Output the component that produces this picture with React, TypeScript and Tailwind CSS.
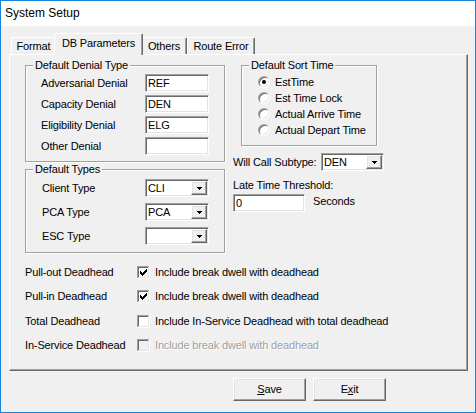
import React from "react";

// Classic Win32 bevels
const sunken =
  "border border-t-[#a0a0a0] border-l-[#a0a0a0] border-b-white border-r-white shadow-[inset_1px_1px_0_#696969,inset_-1px_-1px_0_#e3e3e3]";
const raised =
  "border border-t-white border-l-white border-b-[#696969] border-r-[#696969] shadow-[inset_-1px_-1px_0_#a0a0a0,inset_1px_1px_0_#e3e3e3]";

function GroupBox({
  title,
  className = "",
  children,
}: {
  title: string;
  className?: string;
  children: React.ReactNode;
}) {
  return (
    <fieldset
      className={`border border-[#a0a0a0] shadow-[1px_1px_0_#fff,inset_1px_1px_0_#fff] ${className}`}
    >
      <legend className="ml-[7px] px-[2px] leading-[13px] bg-[#f0f0f0]">{title}</legend>
      {children}
    </fieldset>
  );
}

function TextBox({ value = "", width }: { value?: string; width: string }) {
  return (
    <div className={`${sunken} ${width} h-[18px] bg-white flex items-center pl-[2px]`}>{value}</div>
  );
}

function DropArrow() {
  return (
    <svg width="5" height="3" viewBox="0 0 5 3" shapeRendering="crispEdges">
      <rect x="0" y="0" width="5" height="1" fill="#000" />
      <rect x="1" y="1" width="3" height="1" fill="#000" />
      <rect x="2" y="2" width="1" height="1" fill="#000" />
    </svg>
  );
}

function ComboBox({ value = "", width = "w-[64px]" }: { value?: string; width?: string }) {
  return (
    <div className={`${sunken} ${width} h-[18px] bg-white flex p-[1px] shrink-0`}>
      <span className="flex-1 flex items-center pl-[1px]">{value}</span>
      <div className={`${raised} w-[16px] bg-[#f0f0f0] flex items-center justify-center`}>
        <DropArrow />
      </div>
    </div>
  );
}

function Radio({ label, checked = false }: { label: string; checked?: boolean }) {
  return (
    <div className="h-[16px] flex items-center gap-[5px]">
      <div className="w-[12px] h-[12px] rounded-full border border-t-[#a0a0a0] border-l-[#a0a0a0] border-r-white border-b-white bg-white shadow-[inset_1px_1px_0_#696969,inset_-1px_-1px_0_#e3e3e3] flex items-center justify-center">
        {checked && <div className="w-[4px] h-[4px] rounded-full bg-black" />}
      </div>
      <span>{label}</span>
    </div>
  );
}

function CheckBox({ checked = false, disabled = false }: { checked?: boolean; disabled?: boolean }) {
  const face = disabled ? "#f0f0f0" : "#ffffff";
  return (
    <svg width="13" height="13" viewBox="0 0 13 13" shapeRendering="crispEdges" className="shrink-0">
      <rect x="0" y="0" width="13" height="13" fill="#ffffff" />
      <rect x="2" y="2" width="9" height="9" fill={face} />
      <rect x="0" y="0" width="12" height="1" fill="#a0a0a0" />
      <rect x="0" y="0" width="1" height="12" fill="#a0a0a0" />
      <rect x="1" y="1" width="10" height="1" fill="#696969" />
      <rect x="1" y="1" width="1" height="10" fill="#696969" />
      <rect x="1" y="11" width="11" height="1" fill="#e3e3e3" />
      <rect x="11" y="1" width="1" height="11" fill="#e3e3e3" />
      {checked && (
        <g fill="#000">
          <rect x="3" y="5" width="1" height="3" />
          <rect x="4" y="6" width="1" height="3" />
          <rect x="5" y="7" width="1" height="3" />
          <rect x="6" y="6" width="1" height="3" />
          <rect x="7" y="5" width="1" height="3" />
          <rect x="8" y="4" width="1" height="3" />
          <rect x="9" y="3" width="1" height="3" />
        </g>
      )}
    </svg>
  );
}

function DeadheadRow({
  label,
  text,
  checked = false,
  disabled = false,
}: {
  label: string;
  text: string;
  checked?: boolean;
  disabled?: boolean;
}) {
  return (
    <div className="h-[16px] flex items-center">
      <span className="w-[112px]">{label}</span>
      <CheckBox checked={checked} disabled={disabled} />
      <span
        className={`ml-[5px] ${disabled ? "text-[#a0a0a0] [text-shadow:1px_1px_0_#fff]" : ""}`}
      >
        {text}
      </span>
    </div>
  );
}

const tabBase =
  "border-t border-l border-r border-t-white border-l-white border-r-[#696969] shadow-[inset_-1px_0_0_#a0a0a0] rounded-t-[2px] bg-[#f0f0f0] flex items-center justify-center";

function TabStrip() {
  return (
    <div className="h-[21px] flex items-end pl-[2px]">
      <div className={`${tabBase} w-[45px] h-[17px]`}>Format</div>
      <div className={`${tabBase} relative z-10 -mx-[2px] -mb-[1px] w-[89px] h-[22px] pb-[2px]`}>
        DB Parameters
      </div>
      <div className={`${tabBase} w-[46px] h-[17px]`}>Others</div>
      <div className={`${tabBase} w-[68px] h-[17px]`}>Route Error</div>
    </div>
  );
}

export default function App() {
  return (
    <div className="w-[476px] h-[413px] flex flex-col border border-[#1883d7] bg-[#f0f0f0] text-black text-[11px] leading-[13px] tracking-[-0.15px] font-['Liberation_Sans',Arial,sans-serif] select-none">
      <div className="h-[25px] shrink-0 bg-white flex items-center pl-[4px] text-[12px] tracking-normal">
        System Setup
      </div>

      <div className="flex-1 flex flex-col pl-[8px] pr-[7px] pt-[7px]">
        <TabStrip />

        <div className="h-[317px] border border-t-white border-l-white border-r-[#696969] border-b-[#696969] shadow-[inset_-1px_-1px_0_#a0a0a0] flex flex-col pl-[15px] pt-[4px]">
          <div className="flex">
            {/* left column: denial codes and default types */}
            <div className="w-[200px] flex flex-col gap-[1px]">
              <GroupBox title="Default Denial Type" className="h-[103px]">
                <div className="flex flex-col gap-[3px] pt-[2px] pl-[15px]">
                  {[
                    ["Adversarial Denial", "REF"],
                    ["Capacity Denial", "DEN"],
                    ["Eligibility Denial", "ELG"],
                    ["Other Denial", ""],
                  ].map(([label, value]) => (
                    <div key={label} className="flex items-center">
                      <span className="w-[104px]">{label}</span>
                      <TextBox value={value} width="w-[64px]" />
                    </div>
                  ))}
                </div>
              </GroupBox>

              <GroupBox title="Default Types" className="h-[90px]">
                <div className="flex flex-col gap-[6px] pt-[3px] pl-[16px]">
                  {[
                    ["Client Type", "CLI"],
                    ["PCA Type", "PCA"],
                    ["ESC Type", ""],
                  ].map(([label, value]) => (
                    <div key={label} className="flex items-center">
                      <span className="w-[103px]">{label}</span>
                      <ComboBox value={value} />
                    </div>
                  ))}
                </div>
              </GroupBox>
            </div>

            {/* right column: sort order, subtype and threshold */}
            <div className="ml-[8px] flex flex-col">
              <GroupBox title="Default Sort Time" className="ml-[8px] w-[136px] h-[87px]">
                <div className="flex flex-col pt-[2px] pl-[16px]">
                  <Radio label="EstTime" checked />
                  <Radio label="Est Time Lock" />
                  <Radio label="Actual Arrive Time" />
                  <Radio label="Actual Depart Time" />
                </div>
              </GroupBox>

              <div className="mt-[7px] flex items-center">
                <span className="w-[88px] whitespace-nowrap">Will Call Subtype:</span>
                <ComboBox value="DEN" width="w-[63px]" />
              </div>

              <span className="mt-[8px]">Late Time Threshold:</span>
              <div className="mt-[2px] flex items-center">
                <TextBox value="0" width="w-[72px]" />
                <span className="ml-[8px] -mt-[4px]">Seconds</span>
              </div>
            </div>
          </div>

          <div className="mt-[11px] flex flex-col gap-[8.5px]">
            <DeadheadRow label="Pull-out Deadhead" text="Include break dwell with deadhead" checked />
            <DeadheadRow label="Pull-in Deadhead" text="Include break dwell with deadhead" checked />
            <DeadheadRow
              label="Total Deadhead"
              text="Include In-Service Deadhead with total deadhead"
            />
            <DeadheadRow
              label="In-Service Deadhead"
              text="Include break dwell with deadhead"
              disabled
            />
          </div>
        </div>

        <div className="pt-[7px] pl-[224px] flex gap-[7px]">
          <button className={`${raised} w-[73px] h-[23px] bg-[#f0f0f0] flex items-center justify-center`}>
            <span>
              <span className="underline underline-offset-[1px]">S</span>ave
            </span>
          </button>
          <button className={`${raised} w-[73px] h-[23px] bg-[#f0f0f0] flex items-center justify-center`}>
            <span>
              E<span className="underline underline-offset-[1px]">x</span>it
            </span>
          </button>
        </div>
      </div>
    </div>
  );
}
